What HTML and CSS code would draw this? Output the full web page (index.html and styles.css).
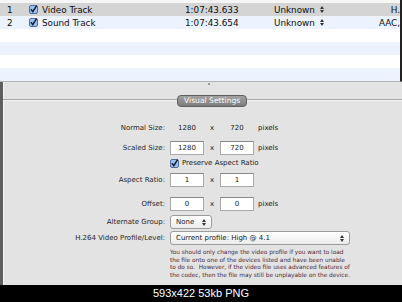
FILE: index.html
```html
<!DOCTYPE html>
<html lang="en">
<head>
  <meta charset="UTF-8" />
  <title>Track Properties</title>
  <link rel="stylesheet" href="styles.css">
</head>
<body>
  <div class="shot">
    <div class="tracks">
      <div class="track selected">
        <span class="num">1</span>
        <span class="check"><svg width="9" height="9" viewBox="0 0 9 9"><rect x="0.5" y="0.5" width="8" height="8" rx="1.5" fill="#9dc0ec" stroke="#4f6f9c"/><path d="M2 4.3 L3.8 6.6 L7.6 0.6" fill="none" stroke="#10203a" stroke-width="1.5"/></svg></span>
        <span class="name">Video Track</span>
        <span class="dur">1:07:43.633</span>
        <span class="lang">Unknown <svg class="ud" width="4" height="7" viewBox="0 0 4 7"><path d="M0 3 L2 0 L4 3 Z M0 4 L2 7 L4 4 Z" fill="#333"/></svg></span>
        <span class="fmt">H.</span>
      </div>
      <div class="track">
        <span class="num">2</span>
        <span class="check"><svg width="9" height="9" viewBox="0 0 9 9"><rect x="0.5" y="0.5" width="8" height="8" rx="1.5" fill="#9dc0ec" stroke="#4f6f9c"/><path d="M2 4.3 L3.8 6.6 L7.6 0.6" fill="none" stroke="#10203a" stroke-width="1.5"/></svg></span>
        <span class="name">Sound Track</span>
        <span class="dur">1:07:43.654</span>
        <span class="lang">Unknown <svg class="ud" width="4" height="7" viewBox="0 0 4 7"><path d="M0 3 L2 0 L4 3 Z M0 4 L2 7 L4 4 Z" fill="#333"/></svg></span>
        <span class="fmt">AAC,</span>
      </div>
      <div class="track"></div>
      <div class="track"></div>
      <div class="track"></div>
      <div class="track"></div>
    </div>

    <div class="settings">
      <div class="splitter"><span class="grip"></span></div>
      <div class="group-head">
        <span class="rule short"></span>
        <span class="tab">Visual Settings</span>
        <span class="rule"></span>
      </div>

      <div class="form">
        <div class="row r-normal">
          <span class="label">Normal Size:</span>
          <span class="field plain">1280</span>
          <span class="times">x</span>
          <span class="field plain">720</span>
          <span class="unit">pixels</span>
        </div>
        <div class="row r-scaled">
          <span class="label">Scaled Size:</span>
          <span class="field">1280</span>
          <span class="times">x</span>
          <span class="field">720</span>
          <span class="unit">pixels</span>
        </div>
        <div class="row r-preserve">
          <span class="label"></span>
          <span class="check"><svg width="9" height="9" viewBox="0 0 9 9"><rect x="0.5" y="0.5" width="8" height="8" rx="1.5" fill="#9dc0ec" stroke="#4f6f9c"/><path d="M2 4.3 L3.8 6.6 L7.6 0.6" fill="none" stroke="#10203a" stroke-width="1.5"/></svg></span>
          <span class="check-text">Preserve Aspect Ratio</span>
        </div>
        <div class="row r-aspect">
          <span class="label">Aspect Ratio:</span>
          <span class="field">1</span>
          <span class="times">x</span>
          <span class="field">1</span>
        </div>
        <div class="row r-offset">
          <span class="label">Offset:</span>
          <span class="field">0</span>
          <span class="times">x</span>
          <span class="field">0</span>
          <span class="unit">pixels</span>
        </div>
        <div class="row r-group">
          <span class="label">Alternate Group:</span>
          <span class="popup small">None <svg width="4" height="7" viewBox="0 0 4 7"><path d="M0 3 L2 0 L4 3 Z M0 4 L2 7 L4 4 Z" fill="#333"/></svg></span>
        </div>
        <div class="row r-profile">
          <span class="label">H.264 Video Profile/Level:</span>
          <span class="popup wide">Current profile: High @ 4.1 <svg width="4" height="7" viewBox="0 0 4 7"><path d="M0 3 L2 0 L4 3 Z M0 4 L2 7 L4 4 Z" fill="#333"/></svg></span>
        </div>
        <div class="row r-note">
          <span class="label"></span>
          <p class="note">You should only change the video profile if you want to load<br>
            the file onto one of the devices listed and have been unable<br>
            to do so.&nbsp; However, if the video file uses advanced features of<br>
            the codec, then the file may still be unplayable on the device.</p>
        </div>
      </div>
    </div>

    <div class="caption">593x422 53kb PNG</div>
  </div>
</body>
</html>
```

FILE: styles.css
```css
body {
  margin: 0;
  background: #000;
  font-family: "DejaVu Sans", Verdana, sans-serif;
  color: #1a1a1a;
}
.shot {
  width: 402px;
  height: 302px;
  overflow: hidden;
  display: flex;
  flex-direction: column;
}

/* track list */
.tracks {
  padding-top: 3px;
  background: #f6f6f6;
  border-bottom: 1px solid #b4b4b4;
  border-right: 2px solid #222;
}
.track {
  height: 13px;
  display: grid;
  grid-template-columns: 22px 13px 143px 89px 1fr auto;
  align-items: center;
  padding: 0 0 0 7px;
  font-size: 8.8px;
  color: #0d0d0d;
  background: #fff;
}
.track:nth-child(even) {
  background: #edf3fe;
}
.track.selected {
  background: #d4d4d4;
}
.track .check svg {
  display: block;
}
.lang {
  display: flex;
  align-items: center;
  gap: 5px;
}
.fmt {
  text-align: right;
}

/* lower panel */
.settings {
  flex: 1;
  background: #e3e3e3;
  border-left: 3px solid #5e5e5e;
  box-shadow: inset 1px 0 #f4f4f4;
}
.splitter {
  height: 13px;
  position: relative;
}
.grip {
  position: absolute;
  left: 205px;
  top: 1px;
  width: 2px;
  height: 2px;
  background: #9a9a9a;
}
.group-head {
  display: flex;
  align-items: center;
  height: 12px;
}
.rule {
  flex: 1;
  height: 1px;
  background: #a9a9a9;
  box-shadow: 0 1px #f2f2f2;
  margin-top: -3px;
}
.rule.short {
  flex: 0 0 174px;
}
.tab {
  height: 12px;
  box-sizing: border-box;
  padding: 0 6px;
  border: 1px solid #5f5f5f;
  border-radius: 4px;
  background: linear-gradient(#a2a2a2, #7c7c7c);
  color: #fff;
  font-size: 7.6px;
  line-height: 10px;
  white-space: nowrap;
}

.form {
  padding-top: 14px;
}
.row {
  display: flex;
  align-items: center;
  height: 14px;
  font-size: 7px;
}
.label {
  width: 162px;
  flex: none;
  text-align: right;
  padding-right: 5px;
  color: #262626;
}
.field {
  width: 34px;
  height: 14px;
  box-sizing: border-box;
  background: #fff;
  border: 1px solid #a8a8a8;
  border-top-color: #878787;
  text-align: center;
  line-height: 12px;
}
.field.plain {
  background: none;
  border-color: transparent;
}
.times {
  width: 16px;
  text-align: center;
}
.unit {
  margin-left: 4px;
}
.r-scaled { margin-top: 6px; }
.r-preserve { margin-top: 3px; height: 10px; }
.r-aspect { margin-top: 5px; }
.r-offset { margin-top: 10px; }
.r-group { margin-top: 4px; }
.r-profile { margin-top: 2px; }
.r-note { margin-top: 4px; height: auto; align-items: flex-start; }

.row .check svg {
  display: block;
}
.check-text {
  margin-left: 3px;
}
.popup {
  height: 14px;
  box-sizing: border-box;
  display: flex;
  align-items: center;
  justify-content: space-between;
  padding: 0 5px;
  border: 1px solid #9c9c9c;
  border-radius: 3px;
  background: linear-gradient(#fff, #ececec);
}
.popup.small { width: 42px; }
.popup.wide { width: 180px; }
.note {
  margin: 0;
  white-space: nowrap;
  font-size: 5.8px;
  line-height: 7.5px;
  color: #4a2c40;
}

.caption {
  height: 17px;
  background: #000;
  color: #fff;
  font-family: "Liberation Sans", Arial, sans-serif;
  font-size: 11px;
  line-height: 17px;
  text-align: center;
}
```
